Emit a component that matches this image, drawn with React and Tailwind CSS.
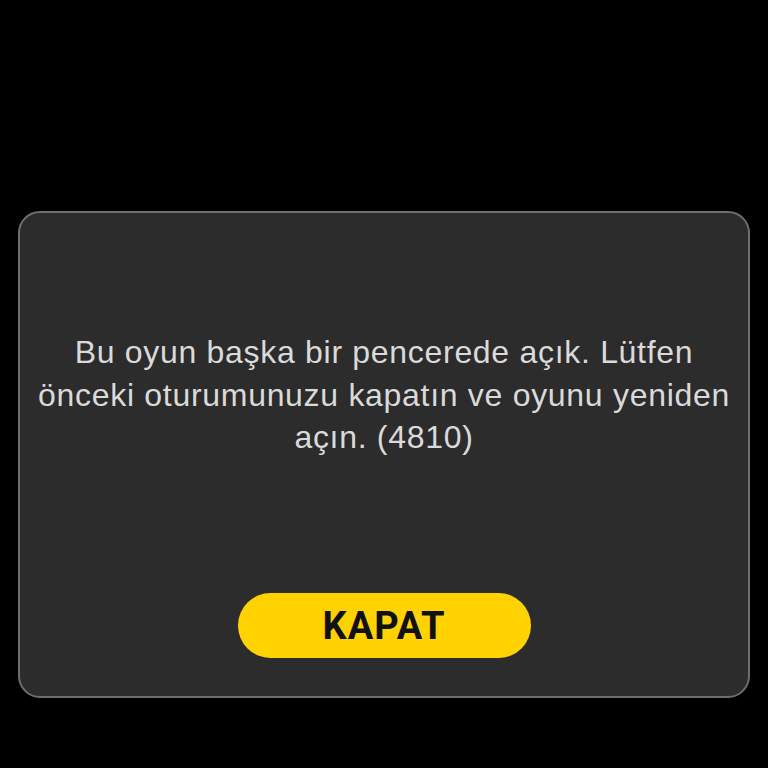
import React from "react";

export default function App() {
  return (
    <div
      className="w-[768px] h-[768px] bg-black pt-[211px] px-[18px]"
      style={{ fontFamily: "'Liberation Sans', Arial, sans-serif" }}
    >
      <div className="h-[487px] rounded-[22px] border-2 border-[#6e6e6e] bg-[#2c2c2c] flex flex-col items-center px-[8px] pt-[118px] pb-[38px]">
        <p className="text-center text-[32px] leading-[42.5px] tracking-[0.7px] text-[#dadada]">
          Bu oyun başka bir pencerede açık. Lütfen önceki oturumunuzu kapatın
          ve oyunu yeniden açın. (4810)
        </p>
        <div className="flex-1" />
        <button
          className="w-[293px] h-[65px] rounded-full bg-[#ffd200] text-[#111] font-bold text-[38px] leading-none tracking-[1px]"
          style={{ fontFamily: "Roboto, 'Liberation Sans', sans-serif" }}
        >
          KAPAT
        </button>
      </div>
    </div>
  );
}
